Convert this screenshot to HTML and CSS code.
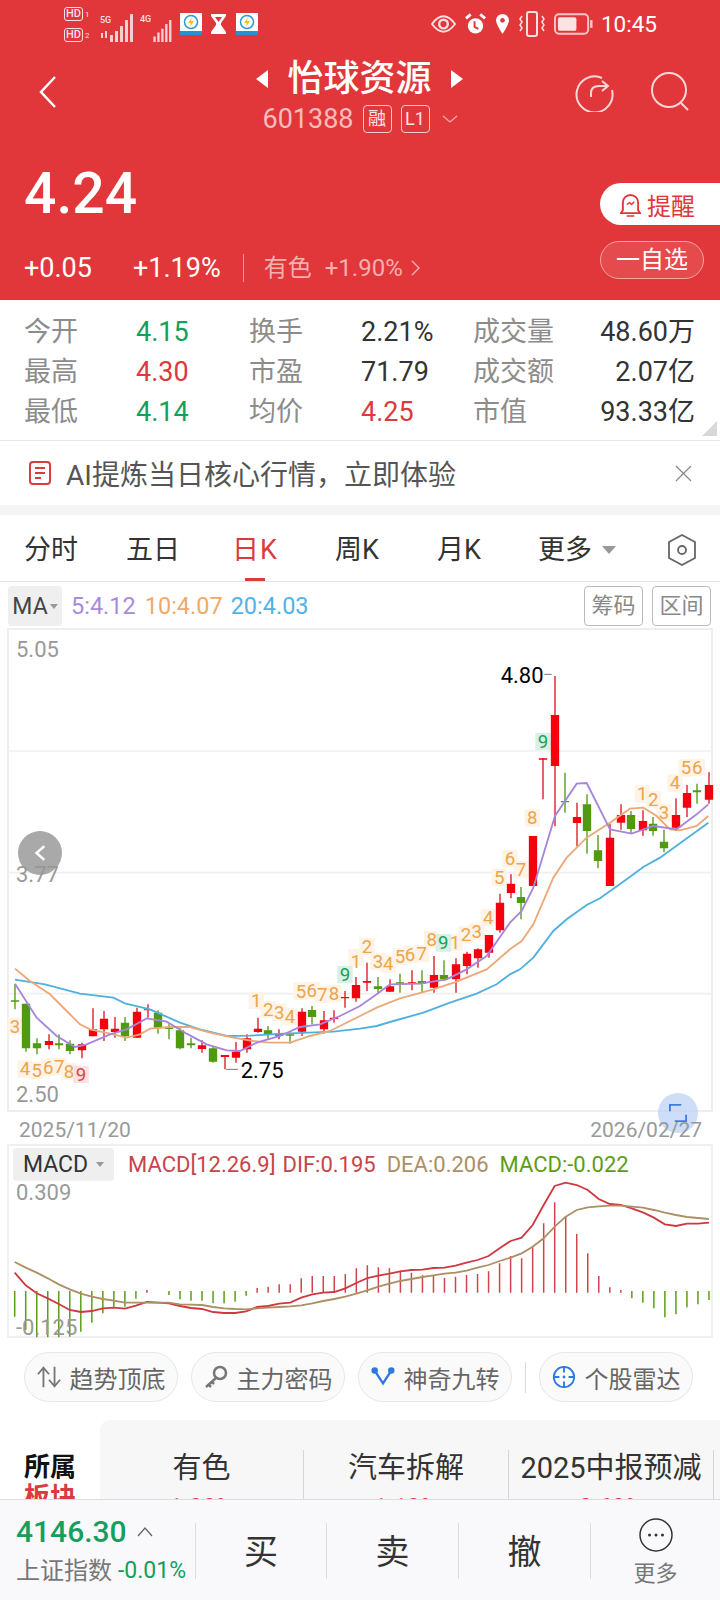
FILE: index.html
```html
<!DOCTYPE html>
<html lang="zh">
<head>
<meta charset="utf-8">
<title>怡球资源</title>
<link rel="stylesheet" href="styles.css">
</head>
<body>
<div class="page">
  <header class="hero">
    <div class="status">
      <div class="status-left">
        <div class="sims"><span class="sim"><b>HD</b><i>1</i></span><span class="sim"><b>HD</b><i>2</i></span></div>
        <div class="net"><span class="net-t">5G</span>
          <svg class="bars" viewBox="0 0 34 28"><path d="M1 19h2v5H1zM5 17h2v7H5zM10 21h3v7h-3zM15 17h3v11h-3zM20 12h3v16h-3zM25 6h3v22h-3zM30 0h3v28h-3z" fill="#f8cfcf"/></svg></div>
        <div class="net net2"><span class="net-t">4G</span>
          <svg class="bars bars2" viewBox="0 0 22 28"><path d="M0 21h3v7H0zM5 16h3v12H5zM10 11h3v17h-3zM15 5h3v23h-3zM20 0h3v28h-3z" fill="#f8cfcf"/></svg></div>
        <svg class="app app1" viewBox="0 0 22 22"><rect width="22" height="22" fill="#fff"/><rect y="18" width="22" height="4" fill="#2b8fd8"/><circle cx="11" cy="9" r="6.500" fill="#fff" stroke="#2c9ad6" stroke-width="1.500"/><path d="M12 4L8 10h3l-1 4 4-6h-3z" fill="#f0c020"/></svg>
        <svg class="glass" viewBox="0 0 17 22"><path d="M1 1h15v2l-5 7v2l5 7v2H1v-2l5-7v-2L1 3z" fill="#fff"/><path d="M5 4h7l-3.500 5z" fill="#e1373a"/></svg>
        <svg class="app" viewBox="0 0 22 22"><rect width="22" height="22" fill="#fff"/><rect y="18" width="22" height="4" fill="#2b8fd8"/><circle cx="11" cy="9" r="6.500" fill="#fff" stroke="#2c9ad6" stroke-width="1.500"/><path d="M12 4L8 10h3l-1 4 4-6h-3z" fill="#f0c020"/></svg>
      </div>
      <div class="status-right">
        <svg class="si eye" viewBox="0 0 26 20"><path d="M1 10Q13-6 25 10 13 26 1 10z" fill="none" stroke="#fbdede" stroke-width="2"/><circle cx="13" cy="10" r="4.500" fill="none" stroke="#fbdede" stroke-width="2.500"/></svg>
        <svg class="si alarm" viewBox="0 0 22 24"><circle cx="11" cy="14" r="8" fill="#fff"/><path d="M10 9v6l4 2" stroke="#e1373a" stroke-width="2" fill="none"/><path d="M1 6l5-4M21 6l-5-4" stroke="#fff" stroke-width="3"/></svg>
        <svg class="si pin" viewBox="0 0 16 24"><path d="M8 1a7 7 0 0 1 7 7c0 5-7 15-7 15S1 13 1 8a7 7 0 0 1 7-7z" fill="#fff"/><circle cx="8" cy="8" r="2.500" fill="#e1373a"/></svg>
        <svg class="si vib" viewBox="0 0 26 26"><rect x="8" y="1" width="10" height="24" rx="2" fill="none" stroke="#fbdede" stroke-width="2"/><path d="M3 5l-2 3 2 3-2 3 2 3-2 3M23 5l2 3-2 3 2 3-2 3 2 3" fill="none" stroke="#fbdede" stroke-width="1.500"/></svg>
        <svg class="si batt" viewBox="0 0 40 22"><rect x="1" y="1" width="34" height="20" rx="4" fill="none" stroke="#f7c5c5" stroke-width="2"/><rect x="4" y="4" width="19" height="14" rx="2" fill="#fbe3e3"/><rect x="37" y="7" width="2.500" height="8" fill="#f7c5c5"/></svg>
        <span class="time">10:45</span>
      </div>
    </div>

    <div class="nav">
      <svg class="back" viewBox="0 0 18 32"><path d="M16 1L2 16l14 15" fill="none" stroke="#fff" stroke-width="2.500"/></svg>
      <div class="title-wrap">
        <div class="title"><span class="tri tri-l"></span><span>怡球资源</span><span class="tri tri-r"></span></div>
        <div class="code"><span>601388</span><span class="tag">融</span><span class="tag">L1</span>
          <svg class="caret" viewBox="0 0 16 8"><path d="M1 1l7 6 7-6" fill="none" stroke="#f3aaaa" stroke-width="1.300"/></svg></div>
      </div>
      <div class="nav-actions">
        <svg class="act" viewBox="0 0 40 40"><path d="M28 6a18 18 0 1 0 10 12" fill="none" stroke="#fbd6d6" stroke-width="2"/><path d="M17 25v-4q0-7 8-7h8M28 9l6 5-6 5" fill="none" stroke="#fbd6d6" stroke-width="2"/></svg>
        <svg class="act" viewBox="0 0 40 40"><circle cx="19" cy="18" r="17" fill="none" stroke="#fbd6d6" stroke-width="2"/><path d="M31 31l7 7" stroke="#fbd6d6" stroke-width="2"/></svg>
      </div>
    </div>

    <div class="quote">
      <div class="quote-main">
        <div class="price">4.24</div>
        <div class="change"><span class="c1">+0.05</span><span class="c2">+1.19%</span><span class="vsep"></span><span class="sector">有色</span><span class="sector-p">+1.90%</span>
          <svg class="more-chev" viewBox="0 0 9 16"><path d="M1 1l7 7-7 7" fill="none" stroke="#f4b5b5" stroke-width="1.300"/></svg></div>
      </div>
      <div class="quote-side">
        <div class="remind">
          <svg class="bell" viewBox="0 0 22 26"><path d="M3 19V11a8 8 0 0 1 16 0v8l2 3H1z" fill="none" stroke="#e1373a" stroke-width="2"/><path d="M7 25h8M7 13l3-2 2 2 3-3" fill="none" stroke="#e1373a" stroke-width="1.500"/></svg>
          <span>提醒</span></div>
        <div class="watch">一自选</div>
      </div>
    </div>
  </header>

  <section class="stats">
    <span class="lb">今开</span><span class="v green">4.15</span><span class="lb">换手</span><span class="v">2.21%</span><span class="lb">成交量</span><span class="v end">48.60万</span>
    <span class="lb">最高</span><span class="v red">4.30</span><span class="lb">市盈</span><span class="v">71.79</span><span class="lb">成交额</span><span class="v end">2.07亿</span>
    <span class="lb">最低</span><span class="v green">4.14</span><span class="lb">均价</span><span class="v red">4.25</span><span class="lb">市值</span><span class="v end">93.33亿</span>
    <span class="corner"></span>
  </section>

  <section class="ai">
    <svg class="ai-ic" viewBox="0 0 22 24"><rect x="1" y="1" width="20" height="22" rx="3" fill="none" stroke="#db3a3e" stroke-width="2"/><path d="M6 7h10M6 12h10M6 17h6" stroke="#db3a3e" stroke-width="2"/></svg>
    <span class="ai-t">AI提炼当日核心行情，立即体验</span>
    <svg class="ai-x" viewBox="0 0 18 18"><path d="M1 1l16 16M17 1L1 17" stroke="#888" stroke-width="1.300"/></svg>
  </section>

  <nav class="tabs">
    <span class="tab">分时</span><span class="tab">五日</span><span class="tab on">日K</span><span class="tab">周K</span><span class="tab">月K</span>
    <span class="tab tab-more">更多<i class="down"></i></span>
    <svg class="hex" viewBox="0 0 28 32"><path d="M14 1l13 7v16l-13 7-13-7V8z" fill="none" stroke="#666" stroke-width="1.800"/><circle cx="14" cy="16" r="4" fill="none" stroke="#666" stroke-width="1.800"/></svg>
  </nav>

  <div class="ma-row">
    <span class="sel">MA<i class="down small"></i></span>
    <span class="m5">5:4.12</span><span class="m10">10:4.07</span><span class="m20">20:4.03</span>
    <span class="tool first">筹码</span><span class="tool">区间</span>
  </div>

  <div class="kline">
    <svg class="kchart" viewBox="0 0 2160 1500">
      <path d="M21 330H2139M21 695H2139M21 1058H2139" stroke="#f0f0f0" stroke-width="5"/>
      <g class="axis"><text x="48" y="48">5.05</text><text x="48" y="722">3.77</text><text x="48" y="1382">2.50</text></g>
      <g class="bd">
        <path d="M22 1130h46v50H22z"/><path d="M52 1258h46v52H52zM87 1262h46v52H87zM122 1252h46v52h-46zM155 1250h46v52h-46zM184 1266h46v52h-46z"/>
        <path d="M746 1052h46v52h-46zM782 1080h46v52h-46zM815 1088h46v52h-46zM847 1100h46v52h-46zM880 1024h46v52h-46zM912 1022h46v52h-46zM944 1034h46v52h-46zM979 1032h46v52h-46zM1045 924h46v52h-46z"/>
        <path d="M1078 890h46v52h-46zM1111 935h46v52h-46zM1142 943h46v52h-46zM1177 920h46v52h-46zM1207 915h46v52h-46zM1242 912h46v52h-46zM1272 870h46v52h-46zM1342 878h46v52h-46zM1375 855h46v52h-46zM1407 845h46v52h-46zM1442 803h46v52h-46zM1475 683h46v52h-46zM1507 627h46v52h-46zM1540 660h46v52h-46zM1574 505h46v52h-46zM1904 433h46v52h-46zM1937 450h46v52h-46zM1969 490h46v52h-46zM2002 400h46v52h-46zM2035 355h46v52h-46zM2069 353h46v52h-46z"/>
      </g>
      <path d="M220 1274h46v52h-46z" fill="#fde0e0"/>
      <path d="M1012 975h46v52h-46zM1307 880h46v52h-46zM1606 275h46v52h-46z" fill="#d9f0e4"/>
      <g class="bn">
        <text x="45" y="1175">3</text><text x="75" y="1303">4</text><text x="110" y="1308">5</text><text x="145" y="1298">6</text><text x="178" y="1295">7</text><text x="207" y="1312">8</text>
        <text x="769" y="1098">1</text><text x="805" y="1125">2</text><text x="838" y="1133">3</text><text x="870" y="1145">4</text><text x="903" y="1070">5</text><text x="935" y="1068">6</text><text x="967" y="1080">7</text><text x="1002" y="1078">8</text><text x="1068" y="980">1</text>
        <text x="1101" y="935">2</text><text x="1134" y="980">3</text><text x="1165" y="988">4</text><text x="1200" y="965">5</text><text x="1230" y="960">6</text><text x="1265" y="957">7</text><text x="1295" y="915">8</text><text x="1365" y="923">1</text><text x="1398" y="900">2</text><text x="1430" y="890">3</text><text x="1465" y="848">4</text><text x="1498" y="728">5</text><text x="1530" y="672">6</text><text x="1563" y="705">7</text><text x="1597" y="550">8</text>
        <text x="1927" y="478">1</text><text x="1960" y="495">2</text><text x="1992" y="535">3</text><text x="2025" y="445">4</text><text x="2058" y="400">5</text><text x="2092" y="398">6</text>
      </g>
      <g class="bn">
        <text class="bn-r" x="243" y="1320">9</text>
        <text class="bn-g" x="1035" y="1020">9</text><text class="bn-g" x="1330" y="925">9</text><text class="bn-g" x="1629" y="320">9</text>
      </g>
      <path class="wick-r" d="M147 1180V1225M246 1205V1252M279 1102V1186M312 1110V1200M345 1128V1190M411 1100V1190M444 1090V1130M606 1198V1235M675 1242V1285M708 1203V1265M741 1180V1235M774 1130V1175M837 1165V1195M906 1102V1185M972 1110V1178M1002 1108V1145M1035 1050V1100M1068 1008V1082M1101 965V1050M1170 1015V1052M1236 988V1048M1302 945V1055M1368 952V1055M1401 932V1000M1434 922V980M1467 882V950M1500 758V875M1533 700V772M1599 585V735M1629 352V475M1665 105V556M1731 485V616M1830 548V735M1863 490V566M1929 508V584M2028 472V570M2061 432V528M2127 394V488"/>
      <path class="wick-g" d="M45 1030V1105M78 1088V1232M111 1192V1240M177 1180V1225M210 1198V1240M375 1128V1200M474 1108V1178M507 1150V1195M540 1160V1225M573 1190V1222M639 1215V1265M804 1155V1195M870 1175V1208M936 1095V1150M1134 1008V1058M1200 998V1055M1266 988V1055M1332 958V1020M1563 738V835M1695 395V515M1761 460V638M1794 582V682M1893 510V576M1959 528V584M1992 566V634M2091 428V488"/>
      <path class="body-r" d="M147 1200V1212M246 1210V1228M279 1165V1186M312 1133V1165M345 1163V1173M411 1112V1190M444 1105V1108M606 1213V1224M675 1242V1248M708 1232V1250M741 1192V1225M774 1163V1173M837 1178V1184M906 1112V1172M972 1138V1165M1002 1130V1134M1035 1068V1072M1068 1032V1072M1101 1020V1025M1170 1036V1052M1236 1024V1028M1302 1002V1040M1368 970V1015M1401 938V975M1434 925V952M1467 882V935M1500 785V868M1533 728V756M1599 585V735M1629 352V356M1665 222V375M1731 528V546M1830 590V735M1863 522V545M1929 540V568M2028 522V560M2061 456V500M2127 432V476"/>
      <path class="body-g" d="M45 1078V1082M78 1088V1222M111 1207V1222M177 1207V1213M210 1208V1230M375 1145V1186M474 1115V1160M507 1158V1164M540 1168V1222M573 1207V1213M639 1222V1262M804 1168V1182M870 1180V1184M936 1107V1128M1134 1036V1044M1200 1024V1028M1266 1020V1028M1332 1002V1015M1563 768V786M1695 480V484M1761 490V570M1794 628V660M1893 522V564M1959 548V570M1992 602V622M2091 448V454"/>
      <path class="ma20" d="M45 1016L135 1030 240 1058 340 1070 375 1087 450 1105 540 1145 600 1165 680 1185 750 1184 850 1178 1000 1172 1080 1163 1130 1155 1180 1140 1270 1115 1350 1085 1430 1058 1490 1030 1530 1000 1560 985 1600 950 1660 870 1700 835 1760 792 1800 772 1880 715 1930 678 1980 650 2125 545"/>
      <path class="ma10" d="M45 983L90 1020 150 1060 200 1110 240 1150 270 1165 330 1178 380 1190 420 1180 450 1163 510 1158 570 1158 630 1175 700 1190 760 1200 810 1205 870 1205 930 1185 990 1170 1080 1125 1130 1100 1200 1072 1300 1045 1370 1022 1460 985 1530 925 1565 900 1600 850 1660 710 1700 650 1760 590 1830 545 1890 503 1930 500 1970 525 2010 565 2040 568 2090 555 2125 525"/>
      <path class="ma5" d="M45 1028L110 1130 170 1185 225 1218 260 1210 330 1180 380 1165 440 1132 500 1142 560 1178 620 1210 680 1228 720 1230 770 1205 840 1185 900 1158 960 1150 1020 1125 1080 1095 1130 1060 1170 1030 1260 1028 1340 1015 1400 985 1460 945 1530 845 1565 810 1600 740 1665 525 1730 428 1760 426 1830 565 1895 578 1960 555 2030 565 2090 520 2125 490"/>
      <path class="tick" d="M1633 100H1655M678 1285H714"/>
      <text class="mark" x="1502" y="125">4.80</text>
      <text class="mark" x="722" y="1312">2.75</text>
    </svg>
    <span class="fab-l"><svg viewBox="0 0 14 20"><path d="M12 2L3 10l9 8" fill="none" stroke="#fff" stroke-width="3"/></svg></span>
    <span class="fab-r"><svg viewBox="0 0 22 22"><path d="M1 9V1h14M21 13v8H7" fill="none" stroke="#3f7ddc" stroke-width="2.500"/></svg></span>
  </div>

  <div class="dates"><span>2025/11/20</span><span>2026/02/27</span></div>

  <div class="macd">
    <svg class="mchart" viewBox="0 0 1568 660" preserveAspectRatio="none">
      <path class="h-g" d="M32 483V560M56 483V600M80 483V622M104 483V622M128 483V622M152 483V620M176 483V605M200 483V578M224 483V550M248 483V530M272 483V530M296 483V506M368 483V495M392 483V508M416 483V512M440 483V512M464 483V520M488 483V520M512 483V515M536 483V497M1376 483V505M1400 483V518M1424 483V535M1448 483V562M1472 483V553M1496 483V532M1520 483V523M1544 483V510"/>
      <path class="h-r" d="M320 488V480M560 488V474M584 488V470M608 488V463M632 488V463M656 488V445M680 488V438M704 488V438M728 488V438M752 488V432M776 488V415M800 488V406M824 488V412M848 488V415M872 488V422M896 488V428M920 488V436M944 488V438M968 488V444M992 488V440M1016 488V435M1040 488V432M1064 488V424M1088 488V400M1112 488V378M1136 488V385M1160 488V350M1184 488V280M1208 488V217M1232 488V258M1256 488V312M1280 488V370M1304 488V438M1328 488V472M1352 488V480"/>
      <path class="dif" d="M32 428L56 466 80 490 104 505 128 522 152 540 176 546 200 543 224 535 248 533 272 536 296 527 320 516 344 518 368 520 392 528 416 534 440 537 464 546 488 549 512 549 536 544 560 531 584 528 608 521 632 518 656 503 680 493 704 488 728 486 752 475 776 459 800 444 824 437 848 431 872 424 896 420 920 419 944 414 968 413 992 407 1016 398 1040 390 1064 378 1088 355 1112 333 1136 323 1160 285 1184 225 1208 168 1232 158 1256 165 1280 180 1304 207 1328 222 1352 225 1376 235 1400 247 1424 263 1448 283 1472 288 1496 281 1520 281 1544 278"/>
      <path class="dea" d="M32 396L56 413 80 428 104 445 128 463 152 478 176 491 200 500 224 507 248 512 272 518 296 518 320 518 344 518 368 518 392 523 416 524 440 525 464 531 488 535 512 537 536 538 560 535 584 533 608 531 632 529 656 526 680 520 704 513 728 507 752 500 776 491 800 481 824 470 848 461 872 453 896 447 920 441 944 436 968 431 992 428 1016 422 1040 413 1064 405 1088 393 1112 383 1136 370 1160 350 1184 325 1208 290 1232 260 1256 240 1280 232 1304 229 1328 227 1352 227 1376 230 1400 233 1424 240 1448 248 1472 255 1496 261 1520 264 1544 267"/>
    </svg>
    <div class="macd-head">
      <span class="sel sel-m">MACD<i class="down small"></i></span>
      <span class="d1">MACD[12.26.9]</span><span class="d1">DIF:0.195</span><span class="d2">DEA:0.206</span><span class="d3">MACD:-0.022</span>
    </div>
    <span class="mlab mtop">0.309</span>
    <span class="mlab mbot">-0.125</span>
  </div>

  <div class="chips">
    <span class="chip"><svg viewBox="0 0 26 24"><path d="M7 23V3M1 9l6-7 6 7M19 1v20M13 15l6 7 6-7" fill="none" stroke="#777" stroke-width="2"/></svg>趋势顶底</span>
    <span class="chip"><svg viewBox="0 0 24 24"><circle cx="16" cy="8" r="6" fill="none" stroke="#777" stroke-width="2.500"/><path d="M12 13L2 22M4 19l3 3M7 16l3 3" stroke="#777" stroke-width="2.500"/></svg>主力密码</span>
    <span class="chip"><svg viewBox="0 0 26 24"><path d="M4 5l9 14 9-14" fill="none" stroke="#2f78e0" stroke-width="2.500"/><circle cx="4" cy="5" r="3.500" fill="#2f78e0"/><circle cx="22" cy="5" r="3.500" fill="#2f78e0"/></svg>神奇九转</span>
    <span class="chip-sep"></span>
    <span class="chip"><svg viewBox="0 0 26 26"><circle cx="13" cy="13" r="11" fill="none" stroke="#2f78e0" stroke-width="2"/><path d="M13 1v7M13 18v7M1 13h7M18 13h7" stroke="#2f78e0" stroke-width="2"/><circle cx="13" cy="13" r="1.500" fill="#2f78e0"/></svg>个股雷达</span>
  </div>

  <div class="sectors">
    <div class="sec-title"><b>所属</b><b class="red">板块</b></div>
    <div class="sec-panel">
      <div class="sec"><span>有色</span><em>1.90%</em></div>
      <div class="sec"><span>汽车拆解</span><em>1.19%</em></div>
      <div class="sec"><span>2025中报预减</span><em>0.69%</em></div>
    </div>
  </div>

  <footer class="bottom">
    <div class="index">
      <div class="idx-top"><span class="idx-v">4146.30</span><svg viewBox="0 0 16 10"><path d="M1 9l7-8 7 8" fill="none" stroke="#666" stroke-width="1.300"/></svg></div>
      <div class="idx-sub"><span>上证指数</span><span class="idx-p">-0.01%</span></div>
    </div>
    <span class="act-b">买</span><span class="act-b">卖</span><span class="act-b">撤</span>
    <div class="act-b more">
      <svg viewBox="0 0 34 34"><circle cx="17" cy="17" r="16" fill="none" stroke="#333" stroke-width="1.500"/><circle cx="10.500" cy="17" r="1.500" fill="#333"/><circle cx="17" cy="17" r="1.500" fill="#333"/><circle cx="23.500" cy="17" r="1.500" fill="#333"/></svg>
      <span>更多</span>
    </div>
  </footer>
</div>
</body>
</html>
```
FILE: styles.css
```css
* { box-sizing: border-box; }
html, body { margin: 0; padding: 0; background: #fff; }
.page {
  position: relative;
  width: 720px;
  height: 1600px;
  overflow: hidden;
  font-family: Roboto, "Noto Sans CJK SC", sans-serif;
  color: #333;
}
i { font-style: normal; }

/* hero */
.hero { background: #e1373a; height: 300px; color: #fff; }
.status { height: 50px; display: flex; justify-content: space-between; padding: 8px 63px 0 64px; }
.status-left { display: flex; align-items: flex-start; }
.sims { display: flex; flex-direction: column; gap: 9px; width: 30px; }
.sim { display: flex; align-items: center; gap: 2px; height: 12px; }
.sim b { font-size: 11px; font-weight: 500; line-height: 12px; border: 1px solid #fbdede; border-radius: 3px; padding: 0 1px; color: #fde; height: 14px; }
.sim i { font-size: 8px; color: #fde; }
.net { position: relative; width: 34px; height: 28px; margin: 6px 0 0 6px; }
.net-t { position: absolute; left: 0; top: 0; font-size: 9px; line-height: 12px; color: #fde; font-weight: 500; }
.bars { width: 34px; height: 28px; display: block; }
.bars2 { width: 22px; height: 22px; margin-top: 6px; }
.net2 { margin-left: 7px; width: 32px; padding-left: 10px; }
.net2 .net-t { left: -1px; top: -1px; }
.app { width: 22px; height: 22px; margin-top: 5px; display: block; }
.app1 { margin-left: 7px; }
.glass { width: 17px; height: 22px; margin: 5px 9px 0 8px; display: block; }
.status-right { display: flex; align-items: center; height: 32px; }
.si { display: block; }
.eye { width: 25px; height: 20px; }
.alarm { width: 21px; height: 24px; margin-left: 9px; }
.pin { width: 15px; height: 22px; margin-left: 9px; }
.vib { width: 26px; height: 26px; margin-left: 9px; }
.batt { width: 39px; height: 22px; margin-left: 9px; }
.time { font-size: 22.500px; line-height: 24px; margin-left: 8px; color: #fff; }

.nav { height: 90px; display: grid; grid-template-columns: 1fr auto 1fr; align-items: start; padding: 0 30px 0 39px; position: relative; }
.back { width: 18px; height: 32px; margin-top: 26px; }
.title-wrap { display: flex; flex-direction: column; align-items: center; position: absolute; left: 0; right: 0; top: 6px; }
.title { display: flex; align-items: center; gap: 19px; font-size: 36px; line-height: 46px; font-weight: 500; height: 46px; color: #fff; margin-left: -1px; }
.tri { width: 0; height: 0; border-top: 9px solid transparent; border-bottom: 9px solid transparent; }
.tri-l { border-right: 12px solid #fff; }
.tri-r { border-left: 12px solid #fff; }
.code { display: flex; align-items: center; font-size: 27px; line-height: 30px; color: #f8bcbc; height: 30px; margin-top: 2px; gap: 9px; margin-left: 0; }
.tag { font-size: 18px; line-height: 26px; width: 29px; height: 28px; text-align: center; border: 1px solid #f8c8c8; border-radius: 4px; color: #fde3e3; }
.caret { width: 16px; height: 8px; margin-left: 3px; }
.nav-actions { grid-column: 3; display: flex; gap: 36px; justify-content: flex-end; margin-top: 22px; position: relative; }
.act { width: 40px; height: 40px; }

.quote { display: flex; justify-content: space-between; height: 160px; padding-left: 24px; }
.quote-main { display: flex; flex-direction: column; }
.price { font-size: 57px; line-height: 66px; height: 113px; padding-top: 21px; font-weight: 500; }
.change { display: flex; align-items: center; height: 30px; font-size: 27px; line-height: 30px; }
.c2 { margin-left: 41px; }
.vsep { width: 1px; height: 28px; background: #f09a9a; margin: 0 20px 0 22px; }
.sector { font-size: 24px; color: #f5b0b0; }
.sector-p { font-size: 24px; color: #f5b0b0; margin-left: 13px; }
.more-chev { width: 9px; height: 16px; margin-left: 8px; }
.quote-side { display: flex; flex-direction: column; width: 120px; padding-top: 43px; }
.remind { height: 42px; background: #fff; border-radius: 21px 0 0 21px; display: flex; align-items: center; padding-left: 20px; gap: 6px; color: #e1373a; font-size: 24px; }
.bell { width: 21px; height: 25px; }
.watch { margin-top: 16px; width: 104px; height: 38px; border: 1px solid #f4a5a5; border-radius: 19px; background: #e54a4c; font-size: 24px; line-height: 36px; text-align: center; color: #fff; }

/* stats */
.stats { position: relative; height: 141px; padding: 12px 25px 0 24px; border-bottom: 1px solid #e8e8e8; display: grid; grid-template-columns: 112px 113px 112px 112px 100px 1fr; grid-auto-rows: 40px; align-items: center; }
.lb { font-size: 27px; color: #8c8c8c; line-height: 40px; }
.v { font-size: 27px; line-height: 40px; color: #333; }
.end { text-align: right; }
.green { color: #12a05c; }
.red { color: #db3a3e; }
.corner { position: absolute; right: 3px; bottom: 4px; width: 0; height: 0; border-left: 15px solid transparent; border-bottom: 15px solid #d8d8d8; }

/* ai */
.ai { height: 64px; display: flex; align-items: center; padding: 0 28px 0 29px; border-bottom: 10px solid #f5f5f5; box-sizing: content-box; }
.ai-ic { width: 22px; height: 24px; }
.ai-t { font-size: 28px; color: #555; margin-left: 15px; line-height: 32px; padding-top: 6px; height: 38px; }
.ai-x { width: 17px; height: 17px; margin-left: auto; }

/* tabs */
.tabs { height: 67px; display: flex; align-items: center; border-bottom: 1px solid #e5e5e5; position: relative; padding-top: 4px; }
.tab { width: 102px; text-align: center; font-size: 27px; line-height: 36px; color: #333; }
.tab.on { color: #db3a3e; position: relative; align-self: stretch; line-height: 62px; letter-spacing: 1px; }
.tab.on::after { content: ""; position: absolute; left: 41px; bottom: 0; width: 20px; height: 3px; background: #db3a3e; }
.tab-more { width: 131px; padding-left: 28px; display: flex; align-items: center; gap: 10px; white-space: nowrap; }
.down { width: 0; height: 0; border-left: 7px solid transparent; border-right: 7px solid transparent; border-top: 8px solid #999; display: inline-block; }
.down.small { border-left-width: 4px; border-right-width: 4px; border-top-width: 5px; }
.hex { width: 28px; height: 32px; margin-left: 27px; }

/* MA row */
.ma-row { height: 46px; display: flex; align-items: center; padding: 2px 9px 0 8px; font-size: 23.500px; }
.sel { background: #efefef; border-radius: 4px; height: 40px; width: 54px; display: flex; align-items: center; justify-content: center; gap: 2px; color: #444; font-size: 23px; }
.m5 { color: #a78bdb; margin-left: 9px; }
.m10 { color: #eeaa66; margin-left: 9px; }
.m20 { color: #4fb3e8; margin-left: 8px; }
.tool { width: 59px; height: 40px; border: 1px solid #bbb; border-radius: 4px; color: #888; font-size: 22px; line-height: 38px; text-align: center; margin-left: 9px; }
.tool.first { margin-left: auto; }

/* kline */
.kline { position: relative; margin-left: 7px; width: 706px; height: 484px; border: 2px solid #eee; }
.kchart { position: absolute; left: -9px; top: 11px; width: 720px; height: 500px; overflow: visible; }
.axis text { font-size: 66px; fill: #999; font-family: Roboto, sans-serif; }
.bd { fill: #fdf3e6; }
.bn text { font-size: 56px; fill: #eda54a; text-anchor: middle; font-family: Roboto, sans-serif; }
.bn .bn-r { fill: #d8434f; }
.bn .bn-g { fill: #18a060; }
.wick-r { stroke: #dc1620; stroke-width: 4; fill: none; }
.wick-g { stroke: #4f9a0f; stroke-width: 4; fill: none; }
.body-r { stroke: #f5000e; stroke-width: 25; fill: none; }
.body-g { stroke: #4f9a0f; stroke-width: 25; fill: none; }
.ma20 { stroke: #4fb0e0; stroke-width: 5.500; fill: none; }
.ma10 { stroke: #eda878; stroke-width: 5.500; fill: none; }
.ma5 { stroke: #a586dc; stroke-width: 5.500; fill: none; }
.tick { stroke: #777; stroke-width: 3; fill: none; }
.mark { font-size: 66px; fill: #000; font-family: Roboto, sans-serif; }
.fab-l { position: absolute; left: 9px; top: 201px; width: 44px; height: 44px; border-radius: 50%; background: rgba(150,150,150,.82); display: flex; align-items: center; justify-content: center; }
.fab-l svg { width: 12px; height: 18px; }
.fab-r { position: absolute; left: 649px; top: 463px; width: 40px; height: 40px; border-radius: 50%; background: rgba(190,210,245,.75); display: flex; align-items: center; justify-content: center; z-index: 2; }
.fab-r svg { width: 18px; height: 18px; }

.dates { height: 32px; display: flex; justify-content: space-between; padding: 0 18px 0 19px; font-size: 21px; line-height: 36px; color: #999; position: relative; z-index: 3; }

/* macd */
.macd { position: relative; margin-left: 7px; width: 706px; height: 194px; border: 2px solid #f0f0f0; }
.mchart { position: absolute; left: -9px; top: -16px; width: 720px; height: 220px; }
.mchart path { fill: none; vector-effect: non-scaling-stroke; }
.h-g { stroke: #5b9e16; stroke-width: 1.500; }
.h-r { stroke: #d0454b; stroke-width: 1.500; }
.dif { stroke: #d0383f; stroke-width: 1.800; }
.dea { stroke: #ad8f63; stroke-width: 1.800; }
.macd-head { position: relative; display: flex; align-items: center; padding: 2px 0 0 4px; height: 35px; font-size: 22px; line-height: 33px; }
.sel-m { width: 101px; height: 33px; gap: 8px; font-size: 23px; color: #333; margin-right: 14px; }
.d1 { color: #c8444a; margin-right: 7px; }
.d2 { color: #ad8f63; margin: 0 11px 0 4px; }
.d3 { color: #5b9e16; }
.mlab { position: absolute; left: 7px; font-size: 22px; line-height: 24px; color: #999; }
.mtop { top: 35px; }
.mbot { top: 170px; }

/* chips */
.chips { display: flex; align-items: center; padding: 14px 0 0 24px; height: 64px; gap: 13px; }
.chip { width: 154px; height: 50px; border: 1px solid #e6e6e6; border-radius: 25px; background: #fafafa; display: flex; align-items: center; justify-content: center; gap: 9px; font-size: 24px; color: #666; }
.chip svg { width: 24px; height: 24px; }
.chip-sep { width: 1px; height: 31px; background: #ddd; }

/* sectors */
.sectors { display: flex; margin-top: 18px; height: 100px; }
.sec-title { width: 100px; padding: 32px 0 0 24px; display: flex; flex-direction: column; font-size: 26px; line-height: 30px; color: #111; }
.sec-panel { flex: 1; background: #f7f7f7; border-radius: 10px 0 0 0; display: grid; grid-template-columns: 204px 205px 205px 1fr; padding-top: 30px; }
.sec { text-align: center; border-right: 1px solid #d5d5d5; display: flex; flex-direction: column; align-items: center; font-size: 29px; line-height: 36px; color: #333; height: 60px; }
.sec span { white-space: nowrap; }
.sec em { font-style: normal; color: #db3a3e; font-size: 24px; line-height: 30px; margin-top: 6px; }

/* bottom */
.bottom { position: absolute; left: 0; right: 0; bottom: 0; height: 101px; background: #f9f9fb; border-top: 1px solid #ddd; display: grid; grid-template-columns: 195px 131px 132px 132px 1fr; align-items: center; }
.index { padding: 0 0 0 16px; height: 100px; }
.idx-top { display: flex; align-items: center; gap: 10px; height: 34px; margin-top: 15px; }
.idx-v { font-size: 30px; line-height: 34px; color: #12a05c; font-weight: 500; }
.idx-top svg { width: 16px; height: 10px; }
.idx-sub { display: flex; align-items: center; margin-top: 7px; font-size: 24px; line-height: 30px; color: #777; white-space: nowrap; }
.idx-p { color: #12a05c; font-size: 23px; margin-left: 6px; }
.act-b { height: 56px; border-left: 1px solid #ddd; display: flex; align-items: center; justify-content: center; font-size: 34px; line-height: 46px; color: #333; margin-top: 2px; padding-top: 2px; }
.more { flex-direction: column; justify-content: flex-start; height: 56px; font-size: 22px; color: #777; gap: 0; margin-top: 2px; padding: 0; }
.more svg { width: 34px; height: 34px; margin-top: -5px; display: block; flex: none; }
.more span { line-height: 30px; margin-top: 7px; }
```
